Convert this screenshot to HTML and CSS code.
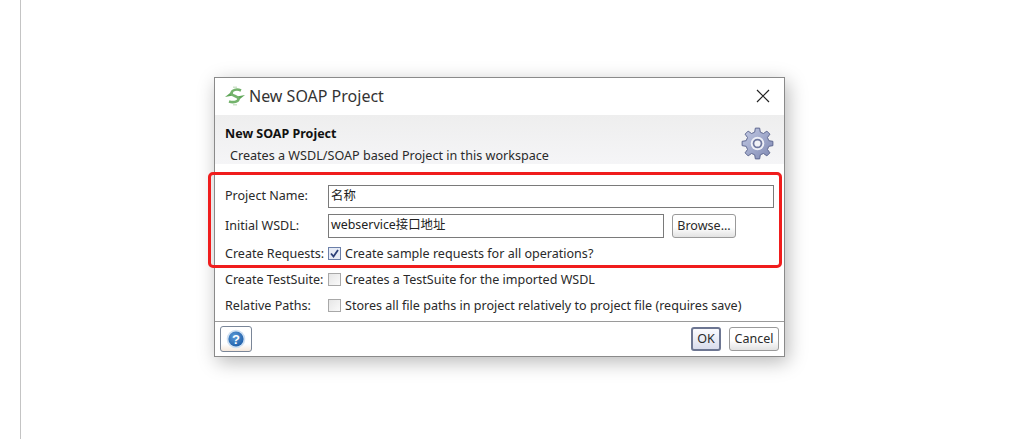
FILE: index.html
```html
<!DOCTYPE html>
<html lang="en">
<head>
<meta charset="utf-8">
<title>New SOAP Project</title>
<link rel="stylesheet" href="styles.css">
</head>
<body>
<div class="page">
  <div class="dialog">
    <div class="titlebar">
      <svg class="logo" width="22" height="22" viewBox="0 0 22 22" aria-hidden="true">
        <path d="M1 12L8 6.500 9 10.500z" fill="#5fa658"/>
        <path d="M21 10L14 15.500 13 11.500z" fill="#5fa658"/>
        <path d="M17 5.500C12.500 3.500 8 5 7.500 8c-.5 3 7 3 7 6 0 2.500-4.500 4-9.500 2.500" fill="none" stroke="#74b36c" stroke-width="2.600"/>
        <path d="M9 1.500h4v1.500H9zM9 19h4v1.500H9z" fill="#cfe3cc"/>
      </svg>
      <span class="title">New SOAP Project</span>
      <svg class="close" width="14" height="14" viewBox="0 0 14 14" aria-hidden="true">
        <path d="M1 1l12 12M13 1L1 13" stroke="#222" stroke-width="1.200" fill="none"/>
      </svg>
    </div>
    <div class="banner">
      <div class="banner-text">
        <div class="banner-title">New SOAP Project</div>
        <div class="banner-desc">Creates a WSDL/SOAP based Project in this workspace</div>
      </div>
      <svg class="gear" width="33" height="33" viewBox="0 0 34 34" aria-hidden="true">
        <defs>
          <linearGradient id="gearFill" x1="0" y1="0" x2="1" y2="1">
            <stop offset="0" stop-color="#c3cae4"/>
            <stop offset="1" stop-color="#7e88b2"/>
          </linearGradient>
        </defs>
        <polygon fill="url(#gearFill)" stroke="#5d668e" stroke-width="1" points="14.1,5.36 14.77,1.15 19.23,1.15 19.9,5.36 23.18,6.72 26.63,4.22 29.78,7.37 27.28,10.82 28.64,14.1 32.85,14.77 32.85,19.23 28.64,19.9 27.28,23.18 29.78,26.63 26.63,29.78 23.18,27.28 19.9,28.64 19.23,32.85 14.77,32.85 14.1,28.64 10.82,27.28 7.37,29.78 4.22,26.63 6.72,23.18 5.36,19.9 1.15,19.23 1.15,14.77 5.36,14.1 6.72,10.82 4.22,7.37 7.37,4.22 10.82,6.72"/>
        <circle cx="17" cy="17" r="7" fill="#eef0f7"/>
        <circle cx="17" cy="17" r="5" fill="#6f789f"/>
        <circle cx="17" cy="17" r="3.200" fill="#f1f2f6"/>
      </svg>
    </div>
    <div class="form">
      <div class="row row-first">
        <label class="label">Project Name:</label>
        <div class="input">名称</div>
      </div>
      <div class="row row-second">
        <label class="label">Initial WSDL:</label>
        <div class="input">webservice接口地址</div>
        <button class="btn btn-browse" type="button">Browse...</button>
      </div>
      <div class="row check-row check-first">
        <span class="label">Create Requests:</span>
        <span class="box checked"><svg width="11" height="11" viewBox="0 0 11 11" aria-hidden="true"><path d="M2 5.500l2.500 3L9 2" fill="none" stroke="#2b3f78" stroke-width="1.800"/></svg></span>
        <span class="check-text">Create sample requests for all operations?</span>
      </div>
      <div class="row check-row">
        <span class="label">Create TestSuite:</span>
        <span class="box"></span>
        <span class="check-text">Creates a TestSuite for the imported WSDL</span>
      </div>
      <div class="row check-row">
        <span class="label">Relative Paths:</span>
        <span class="box"></span>
        <span class="check-text">Stores all file paths in project relatively to project file (requires save)</span>
      </div>
    </div>
    <div class="footer">
      <button class="btn btn-help" type="button" aria-label="Help">
        <svg width="20" height="20" viewBox="0 0 20 20" aria-hidden="true">
          <defs>
            <radialGradient id="helpFill" cx=".4" cy=".35" r=".7">
              <stop offset="0" stop-color="#5b9ad8"/>
              <stop offset="1" stop-color="#1f5ea8"/>
            </radialGradient>
          </defs>
          <circle cx="10" cy="10" r="9.300" fill="#cfe0f2"/>
          <circle cx="10" cy="10" r="7.600" fill="url(#helpFill)"/>
          <text x="10" y="14.500" class="help-mark">?</text>
        </svg>
      </button>
      <div class="footer-actions">
        <button class="btn btn-ok" type="button">OK</button>
        <button class="btn btn-cancel" type="button">Cancel</button>
      </div>
    </div>
    <div class="highlight"></div>
  </div>
</div>
</body>
</html>
```
FILE: styles.css
```css
* { box-sizing: border-box; }
html, body { margin: 0; height: 100%; background: #fff; overflow: hidden; }
body { font-family: "Noto Sans", "Noto Sans CJK SC", sans-serif; font-size: 12.550px; color: #2a2a2a; }

.page {
  height: 439px;
  margin-left: 20px;
  padding: 77px 0 0 193px;
  border-left: 1px solid #c4c4c4;
}

.dialog {
  position: relative;
  width: 571px;
  height: 280px;
  background: #fff;
  border: 1px solid #8a8a8a;
  box-shadow: 3px 5px 18px rgba(0, 0, 0, .28);
  display: flex;
  flex-direction: column;
}

.titlebar {
  height: 37px;
  display: flex;
  align-items: center;
  padding: 0 14px 2px 9px;
  flex: none;
}
.logo { flex: none; margin-right: 3px; }
.title { font-size: 16px; color: #333; flex: 1; }
.close { flex: none; }

.banner {
  height: 49px;
  flex: none;
  display: flex;
  justify-content: space-between;
  background: linear-gradient(#eeeeee, #f5f5f7);
  padding: 10px 10px 0 10px;
}
.banner-title { font-weight: 700; font-size: 12.500px; color: #111; line-height: 17px; }
.banner-desc { margin: 5px 0 0 5px; line-height: 17px; font-size: 12.600px; }
.gear { margin-top: 2px; }

.form {
  flex: 1;
  padding: 21px 10px 0 10px;
}
.row { display: flex; align-items: center; }
.row-first { height: 23px; }
.row-second { height: 24px; margin-top: 6px; }
.label { width: 103px; flex: none; }
.row-first .label, .row-second .label { margin-bottom: 2px; }
.input {
  flex: 1;
  height: 100%;
  border: 1px solid #7a7a7a;
  padding: 0 2px;
  line-height: 19px;
  font-size: 12.400px;
  color: #222;
}
.row-second .input { flex: 0 0 336px; }

.check-row { height: 26px; }
.check-first { margin-top: 2px; }
.box {
  width: 13px;
  height: 13px;
  margin-right: 4px;
  flex: none;
  border: 1px solid #a8a8a8;
  background: linear-gradient(135deg, #e6e6e6, #fafafa);
  display: flex;
  align-items: center;
  justify-content: center;
}
.box.checked { border-color: #6b7fa8; background: #e6ebf6; }
.check-text { white-space: nowrap; }

.btn {
  font: inherit;
  color: #2a2a2a;
  padding: 0 0 2px;
  border: 1px solid #9a9a9a;
  border-radius: 3px;
  background: linear-gradient(#fff 55%, #e2e2e2);
}
.btn-browse { width: 64px; height: 24px; margin-left: 8px; flex: none; }

.footer {
  height: 35px;
  flex: none;
  border-top: 1px solid #9a9a9a;
  display: flex;
  justify-content: space-between;
  align-items: center;
  padding: 0 5px;
}
.footer-actions { display: flex; gap: 8px; }
.btn-help {
  width: 32px;
  height: 26px;
  display: flex;
  align-items: center;
  justify-content: center;
  padding: 0;
  border-color: #7a8698;
  background: linear-gradient(#fff 70%, #f5e8dc);
}
.help-mark { font: 700 13px "Liberation Sans", sans-serif; fill: #fff; text-anchor: middle; }
.btn-ok { width: 30px; height: 24px; border: 2px solid #6d7692; background: linear-gradient(#fbfbfe, #d9dcec); }
.btn-cancel { width: 50px; height: 24px; }

.highlight {
  position: absolute;
  left: -7px;
  top: 94px;
  width: 574px;
  height: 96px;
  border: 3px solid #f01d1d;
  border-radius: 5px;
  pointer-events: none;
}
```
